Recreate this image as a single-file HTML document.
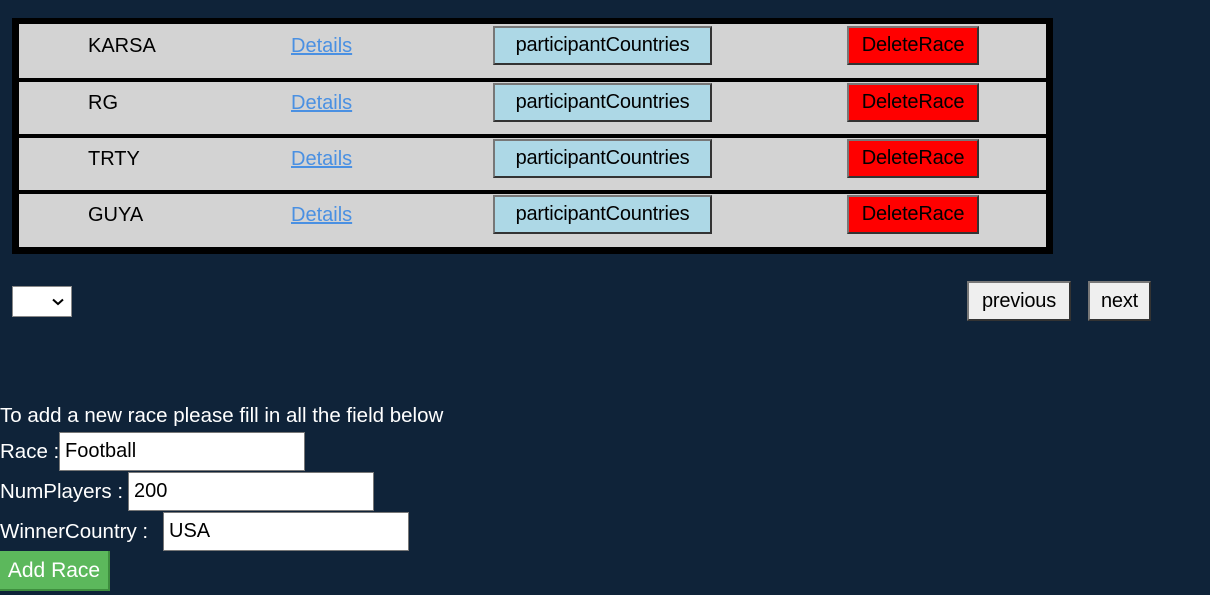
<!DOCTYPE html>
<html><head><meta charset="utf-8"><style>
body{margin:0;width:1210px;height:595px;background:#0f2339;font-family:"Liberation Sans",sans-serif;font-size:20px;position:relative;overflow:hidden}
.a{position:absolute}
.tbl{left:12px;top:18px;width:1041px;height:236px;background:#000}
.row{left:19px;width:1027px;background:#d3d3d3}
.name{left:88px;color:#000;font-size:20px}
.det{left:291px;color:#4a90e2;text-decoration:underline;font-size:20px}
.btn{box-sizing:border-box;border:2px solid;border-color:#777 #333 #333 #777;text-align:center;font-size:20px;color:#000;white-space:nowrap;letter-spacing:-0.2px}
.pc{left:493px;width:219px;height:39px;line-height:35px;background:#add8e6}
.dr{left:847px;width:132px;height:39px;line-height:35px;background:#f00}
.in{box-sizing:border-box;background:#fff;border:1px solid #777;height:39px;width:246px;line-height:37px;padding-left:5px;font-size:20px;color:#000}
.lbl{color:#fff;font-size:20.5px;left:0;white-space:nowrap}
</style></head><body>
<div class="a tbl"></div>
<div class="a row" style="top:24px;height:54px"></div>
<div class="a row" style="top:82px;height:52px"></div>
<div class="a row" style="top:138px;height:52px"></div>
<div class="a row" style="top:194px;height:53px"></div>

<div class="a name" style="top:35px">KARSA</div><div class="a det" style="top:35px">Details</div>
<div class="a btn pc" style="top:26px">participantCountries</div><div class="a btn dr" style="top:26px">DeleteRace</div>
<div class="a name" style="top:92px">RG</div><div class="a det" style="top:92px">Details</div>
<div class="a btn pc" style="top:83px">participantCountries</div><div class="a btn dr" style="top:83px">DeleteRace</div>
<div class="a name" style="top:148px">TRTY</div><div class="a det" style="top:148px">Details</div>
<div class="a btn pc" style="top:139px">participantCountries</div><div class="a btn dr" style="top:139px">DeleteRace</div>
<div class="a name" style="top:204px">GUYA</div><div class="a det" style="top:204px">Details</div>
<div class="a btn pc" style="top:195px">participantCountries</div><div class="a btn dr" style="top:195px">DeleteRace</div>

<div class="a" style="left:12px;top:286px;width:60px;height:31px;background:#fff;border:1px solid #888;box-sizing:border-box"><svg class="a" style="left:39px;top:11px" width="12" height="8"><path d="M1 1.5L6 6L11 1.5" stroke="#000" stroke-width="2" fill="none"/></svg></div>
<div class="a btn" style="left:967px;top:281px;width:104px;height:40px;line-height:36px;background:#efefef">previous</div>
<div class="a btn" style="left:1088px;top:281px;width:63px;height:40px;line-height:36px;background:#efefef">next</div>

<div class="a lbl" style="top:404px">To add a new race please fill in all the field below</div>
<div class="a lbl" style="top:440px">Race :</div><div class="a in" style="left:59px;top:432px">Football</div>
<div class="a lbl" style="top:480px">NumPlayers :</div><div class="a in" style="left:128px;top:472px">200</div>
<div class="a lbl" style="top:520px">WinnerCountry :</div><div class="a in" style="left:163px;top:512px">USA</div>
<div class="a" style="left:0;top:551px;width:110px;height:40px;background:#5cb85c;border-right:2px solid #3e8e3e;border-bottom:2px solid #3e8e3e;box-sizing:border-box;color:#fff;font-size:21px;line-height:40px;text-align:center">Add Race</div>
</body></html>
